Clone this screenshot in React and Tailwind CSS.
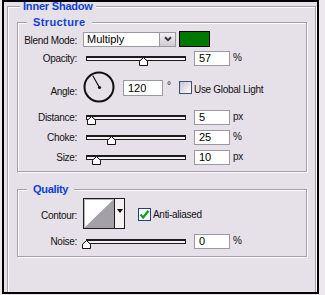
import React from "react";

/* etched group box, like the old Mac/Win dialogs */
function Group({ title, className, titleClass, children }) {
  return (
    <div
      className={
        "relative border border-[#a49ea8] shadow-[inset_1px_1px_0_#fff,1px_1px_0_#fff] " +
        className
      }
    >
      <span
        className={
          "absolute -top-[7px] bg-[#e6e0e8] font-bold leading-[12px] text-[#0d3fd0] " +
          titleClass
        }
      >
        {title}
      </span>
      {children}
    </div>
  );
}

function Label({ children, className = "" }) {
  return (
    <div className={"w-[59px] shrink-0 text-right whitespace-nowrap " + className}>
      {children}
    </div>
  );
}

function Slider({ value }) {
  return (
    <div className="relative ml-[9px] h-[5px] w-[100px] shrink-0 border border-t-2 border-[#1c1c1c] bg-[#f4f2f5]">
      <svg
        className="absolute -top-[1px]"
        style={{ left: value - 5 }}
        width="9"
        height="9"
        viewBox="0 0 9 9"
      >
        <path d="M0.5 8.5V4.2L4.5 0.6L8.5 4.2V8.5Z" fill="#fff" stroke="#111" strokeWidth="1" />
      </svg>
    </div>
  );
}

function Field({ value, className = "ml-[8px] w-[36px] h-[15px]" }) {
  return (
    <div
      className={
        "shrink-0 border border-[#9c98a2] bg-white pl-[4px] text-[11px] leading-[13px] tracking-normal text-black " +
        className
      }
    >
      {value}
    </div>
  );
}

function SliderRow({ label, value, unit, className }) {
  return (
    <div className={"flex h-[17px] items-center " + className}>
      <Label>{label}</Label>
      <Slider value={value} />
      <Field value={value} />
      <span className="ml-[3px] -mt-[2px]">{unit}</span>
    </div>
  );
}

export default function App() {
  return (
    <div className="h-[295px] w-[325px] overflow-hidden bg-[#ede8ee] font-['Liberation_Sans',Arial,sans-serif] text-[10px] tracking-[-0.3px] text-[#111]">
      <div className="ml-[2px] h-[294px] w-[317px] overflow-hidden border-2 border-black bg-[#e6e0e8] pl-[3px] pt-[4px]">
        <Group
          title="Inner Shadow"
          className="h-[320px] w-[309px] border-b-0"
          titleClass="left-[12px] px-[3px] text-[11px] tracking-[-0.2px]"
        >
          {/* ---- Structure ---- */}
          <Group
            title="Structure"
            className="ml-[9px] mt-[15px] h-[150px] w-[290px] pt-[7px]"
            titleClass="left-[9px] px-[6px] text-[11px] tracking-[0.4px]"
          >
            <div className="flex h-[18px] items-center">
              <Label className="mt-[2px]">Blend Mode:</Label>
              <div className="ml-[6px] flex h-[15px] w-[93px] shrink-0 border border-[#9c98a2] bg-white">
                <span className="flex-1 pl-[3px] text-[11px] leading-[13px] tracking-normal text-black">
                  Multiply
                </span>
                <div className="flex w-[16px] items-center justify-center border-l border-[#9c98a2] bg-gradient-to-b from-[#f2eff3] to-[#cfcad3]">
                  <svg width="8" height="6" viewBox="0 0 8 6">
                    <path d="M1 1.2L4 4.2L7 1.2" fill="none" stroke="#333" strokeWidth="2" />
                  </svg>
                </div>
              </div>
              <div className="ml-[3px] h-[16px] w-[31px] shrink-0 border border-black bg-[#007700]" />
            </div>

            <SliderRow label="Opacity:" value={57} unit="%" className="mt-[2px]" />

            <div className="mt-[4px] flex h-[32px] items-start">
              <Label className="mt-[13px]">Angle:</Label>
              <svg className="ml-[6px] shrink-0" width="32" height="32" viewBox="0 0 32 32">
                <circle cx="16" cy="16" r="14.5" fill="none" stroke="#111" strokeWidth="2" />
                <line x1="16.5" y1="16.5" x2="9.8" y2="4.8" stroke="#111" strokeWidth="1.2" />
                <circle cx="16.5" cy="16.5" r="1.6" fill="#111" />
              </svg>
              <Field value="120" className="ml-[8px] mt-[9px] h-[16px] w-[40px] leading-[14px]" />
              <span className="ml-[4px] mt-[7px] w-[8px] text-[10px]">°</span>
              <div className="ml-[4px] mt-[10px] h-[13px] w-[13px] shrink-0 border border-[#3b4f7c] bg-gradient-to-br from-[#c9c4cd] to-white" />
              <span className="ml-[2px] mt-[11px] whitespace-nowrap">Use Global Light</span>
            </div>

            <SliderRow label="Distance:" value={5} unit="px" className="mt-[6px]" />
            <SliderRow label="Choke:" value={25} unit="%" className="mt-[3px]" />
            <SliderRow label="Size:" value={10} unit="px" className="mt-[3px]" />
          </Group>

          {/* ---- Quality ---- */}
          <Group
            title="Quality"
            className="ml-[9px] mt-[17px] h-[68px] w-[290px] pt-[8px]"
            titleClass="left-[9px] px-[6px] text-[11px]"
          >
            <div className="flex h-[31px] items-center">
              <Label className="mt-[3px]">Contour:</Label>
              <div className="ml-[6px] flex h-[31px] w-[42px] shrink-0 border border-[#1c1c1c] bg-white">
                <svg width="30" height="29" viewBox="0 0 30 29" className="shrink-0">
                  <rect x="0" y="0" width="30" height="29" fill="#fff" />
                  <path d="M0 29L30 0V29Z" fill="#a3a0a8" />
                  <path d="M0.5 29V0.5H30" fill="none" stroke="#b8b4bc" strokeWidth="1" />
                </svg>
                <div className="flex flex-1 items-start justify-center border-l border-[#1c1c1c] bg-[#f4f2f5] pt-[10px]">
                  <svg width="6" height="4" viewBox="0 0 6 4">
                    <path d="M0 0H6L3 4Z" fill="#111" />
                  </svg>
                </div>
              </div>
              <div className="ml-[13px] mt-[1px] flex h-[13px] w-[13px] shrink-0 items-center justify-center border border-[#1f3f7f] bg-white">
                <svg width="11" height="11" viewBox="0 0 11 11">
                  <path d="M1.5 5.5L4.2 8.5L9.5 1.8" fill="none" stroke="#1a9a1a" strokeWidth="2.2" />
                </svg>
              </div>
              <span className="ml-[2px] mt-[2px] whitespace-nowrap">Anti-aliased</span>
            </div>

            <SliderRow label="Noise:" value={0} unit="%" className="mt-[4px]" />
          </Group>
        </Group>
      </div>
    </div>
  );
}
